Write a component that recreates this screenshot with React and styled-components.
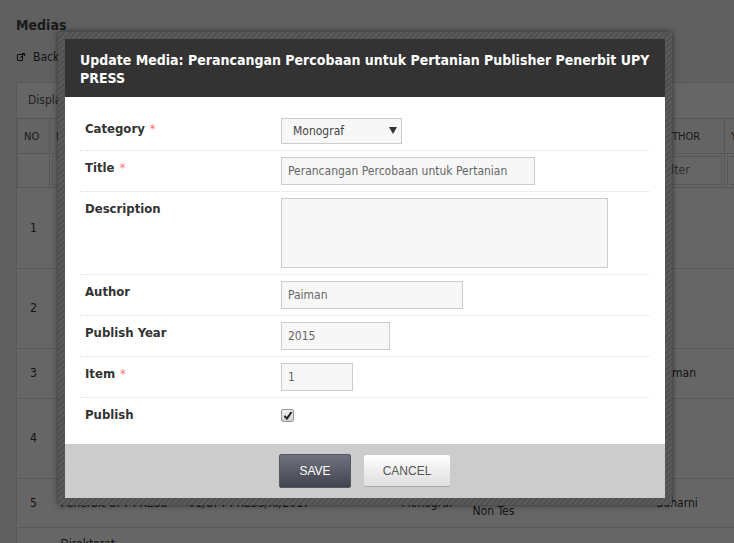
import React from 'react';
import styled, { createGlobalStyle } from 'styled-components';

const bodyFont = '"DejaVu Sans Condensed", "Open Sans", sans-serif';

const GlobalStyle = createGlobalStyle`
  html, body {
    margin: 0;
    padding: 0;
    height: 100%;
    overflow: hidden;
    background: #f0f0f0;
    font-family: ${bodyFont};
    font-size: 12px;
    color: #333;
  }
`;

const Page = styled.div`
  height: 543px;
  overflow: hidden;
  padding: 17px 0 0 16px;
  box-sizing: border-box;
`;

const PageTitle = styled.h1`
  margin: 0 0 15px;
  font-size: 14px;
  line-height: 17px;
  font-weight: 700;
  color: #444;
`;

const BackLink = styled.div`
  display: flex;
  align-items: center;
  gap: 7px;
  height: 16px;
  margin-bottom: 17px;
  font-size: 12px;
  color: #333;
`;

const Panel = styled.div`
  width: 800px;
  background: #fff;
  border: 1px solid #e2e2e2;
  border-right: 0;
`;

const PanelBar = styled.div`
  height: 35px;
  line-height: 35px;
  padding-left: 11px;
  color: #555;
`;

const Table = styled.table`
  width: 800px;
  table-layout: fixed;
  border-collapse: collapse;
`;

const HeadCell = styled.th`
  height: 34px;
  padding: 0 6px;
  font-size: 11px;
  font-weight: 400;
  text-align: left;
  color: #444;
  border: 1px solid #ddd;
  background: #f9f9f9;
`;

const FilterCell = styled.td`
  height: 29px;
  padding: 2px;
  border: 1px solid #ddd;
`;

const FilterBox = styled.div`
  height: 27px;
  line-height: 27px;
  padding-left: 8px;
  border: 1px dotted #bbb;
  color: #777;
  overflow: hidden;
`;

const Row = styled.tr`
  height: ${({ $h }) => $h}px;
`;

const Cell = styled.td`
  padding: 0 5px 0 ${({ $pad }) => $pad || 5}px;
  border-bottom: 1px solid #ddd;
  line-height: 16.5px;
  color: #333;
  vertical-align: middle;
  white-space: pre-line;
  text-align: ${({ $center }) => ($center ? 'center' : 'left')};
`;

const Overlay = styled.div`
  position: absolute;
  inset: 0;
  background: rgba(0, 0, 0, 0.6);
`;

const ModalFrame = styled.div`
  position: absolute;
  top: 32px;
  left: 58px;
  width: 600px;
  padding: 7px;
  background: repeating-linear-gradient(135deg, #505050 0 2px, #5a5a5a 2px 4px);
  box-shadow: 0 0 6px rgba(0, 0, 0, 0.55);
`;

const ModalHeader = styled.div`
  height: 58px;
  box-sizing: border-box;
  padding: 12px 15px 0;
  background: #333;
  color: #fff;
  font-size: 14px;
  font-weight: 700;
  line-height: 18px;
`;

const ModalBody = styled.div`
  height: 347px;
  box-sizing: border-box;
  padding: 15px 15px 0;
  background: #fff;
`;

const FormRow = styled.div`
  display: grid;
  grid-template-columns: 196px 1fr;
  padding: 6px 0 6px 5px;
  border-bottom: ${({ $last }) => ($last ? '0' : '1px dotted #ddd')};
`;

const Label = styled.div`
  padding-top: 2px;
  font-size: 13px;
  line-height: 18px;
  font-weight: 700;
  color: #333;
`;

const Required = styled.span`
  margin-left: 5px;
  color: #f77;
  font-weight: 400;
`;

const SelectWrap = styled.div`
  position: relative;
  width: 121px;
  height: 26px;
`;

const Select = styled.select`
  appearance: none;
  width: 100%;
  height: 100%;
  padding: 0 0 0 11px;
  border: 1px solid #ccc;
  border-radius: 0;
  background: #f7f7f7;
  font: 400 12px ${bodyFont};
  color: #444;
`;

const Caret = styled.span`
  position: absolute;
  top: 9px;
  right: 5px;
  width: 0;
  height: 0;
  border-left: 4px solid transparent;
  border-right: 4px solid transparent;
  border-top: 7px solid #333;
`;

const Field = styled.input`
  display: block;
  width: ${({ $w }) => $w}px;
  height: 28px;
  box-sizing: border-box;
  padding: 0 6px;
  border: 1px solid #ccc;
  background: #f7f7f7;
  font: 400 12px ${bodyFont};
  color: #666;
`;

const TextArea = styled.textarea`
  display: block;
  width: 327px;
  height: 70px;
  box-sizing: border-box;
  padding: 6px;
  border: 1px solid #ccc;
  background: #f7f7f7;
  resize: none;
`;

const CheckBox = styled.span`
  display: flex;
  align-items: center;
  justify-content: center;
  width: 13px;
  height: 13px;
  margin-top: 5px;
  box-sizing: border-box;
  border: 1px solid #999;
  border-radius: 2px;
  background: linear-gradient(#f0f0f0, #cfcfcf);
`;

const ModalFooter = styled.div`
  display: flex;
  align-items: center;
  justify-content: center;
  gap: 13px;
  height: 54px;
  padding-right: 1px;
  background: #ccc;
`;

const SaveButton = styled.button`
  width: 72px;
  height: 34px;
  padding: 0;
  border: 1px solid #555761;
  border-radius: 2px;
  background: linear-gradient(#70727f, #41434d);
  color: #fff;
  font: 400 12px "Liberation Sans", Arial, sans-serif;
`;

const CancelButton = styled.button`
  width: 86px;
  height: 32px;
  padding: 0;
  border: 0;
  border-bottom: 1px solid #aaa;
  border-radius: 2px;
  background: linear-gradient(#fff, #dedede);
  color: #555;
  font: 400 12px "Liberation Sans", Arial, sans-serif;
`;

const columns = [32, 134, 213, 71, 184, 73, 92];

const longPublisher = 'Direktorat\nPendidikan\nUniversitas\nIslam';

const rows = [
  { no: 1, h: 81, pub: longPublisher, num: '', cat: '', title: '', author: '' },
  { no: 2, h: 80, pub: longPublisher, num: '', cat: '', title: '', author: '' },
  { no: 3, h: 50, pub: 'Penerbit UPY PRESS', num: '', cat: '', title: '', author: 'Paiman' },
  { no: 4, h: 80, pub: longPublisher, num: '', cat: '', title: '', author: '' },
  { no: 5, h: 49, pub: 'Penerbit UPY PRESS', num: '01/UPY PRESS/XI/2017', cat: 'Monograf', title: 'Pemahaman Individu Teknik\nNon Tes', author: 'Suharni' },
  { no: '', h: 82, pub: 'Direktorat\nPendidikan\nTinggi\nIslam', num: '', cat: '', title: 'Mencintakan Masyarakat Desa', author: '' },
];

function Background() {
  return (
    <Page>
      <PageTitle>Medias</PageTitle>
      <BackLink>
        <svg width="10" height="10" viewBox="0 0 10 10" fill="none" stroke="#222" strokeWidth="1">
          <path d="M1.5 2.5h5v6h-5zM4 6l4.5-4.5M6 1.5h2.5V4" />
        </svg>
        Back to list
      </BackLink>
      <Panel>
        <PanelBar>Display</PanelBar>
        <Table>
          <colgroup>
            {columns.map((w, i) => <col key={i} width={w} />)}
          </colgroup>
          <thead>
            <tr>
              {['NO', 'PUBLISHER', 'NUMBER', 'CATEGORY', 'TITLE', 'AUTHOR', 'YEAR'].map((h) => (
                <HeadCell key={h}>{h}</HeadCell>
              ))}
            </tr>
            <tr>
              <FilterCell />
              {['Filter', 'Filter', 'Filter', 'Filter', 'Filter', 'Filter'].map((f, i) => (
                <FilterCell key={i}><FilterBox>{f}</FilterBox></FilterCell>
              ))}
            </tr>
          </thead>
          <tbody>
            {rows.map((r, i) => (
              <Row key={i} $h={r.h}>
                <Cell $center>{r.no}</Cell>
                <Cell $pad={11}>{r.pub}</Cell>
                <Cell>{r.num}</Cell>
                <Cell>{r.cat}</Cell>
                <Cell>{r.title}</Cell>
                <Cell>{r.author}</Cell>
                <Cell />
              </Row>
            ))}
          </tbody>
        </Table>
      </Panel>
    </Page>
  );
}

export default function App() {
  return (
    <>
      <GlobalStyle />
      <Background />
      <Overlay />
      <ModalFrame>
        <ModalHeader>Update Media: Perancangan Percobaan untuk Pertanian Publisher Penerbit UPY PRESS</ModalHeader>
        <ModalBody>
          <FormRow>
            <Label>Category<Required>*</Required></Label>
            <SelectWrap>
              <Select defaultValue="Monograf">
                <option>Monograf</option>
              </Select>
              <Caret />
            </SelectWrap>
          </FormRow>
          <FormRow>
            <Label>Title<Required>*</Required></Label>
            <Field $w={254} defaultValue="Perancangan Percobaan untuk Pertanian" />
          </FormRow>
          <FormRow>
            <Label>Description</Label>
            <TextArea />
          </FormRow>
          <FormRow>
            <Label>Author</Label>
            <Field $w={182} defaultValue="Paiman" />
          </FormRow>
          <FormRow>
            <Label>Publish Year</Label>
            <Field $w={109} defaultValue="2015" />
          </FormRow>
          <FormRow>
            <Label>Item<Required>*</Required></Label>
            <Field $w={72} defaultValue="1" />
          </FormRow>
          <FormRow $last>
            <Label>Publish</Label>
            <CheckBox>
              <svg width="10" height="9" viewBox="0 0 10 9" fill="none" stroke="#222" strokeWidth="2">
                <path d="M1.5 5l2.5 2.5L8.5 1" />
              </svg>
            </CheckBox>
          </FormRow>
        </ModalBody>
        <ModalFooter>
          <SaveButton>SAVE</SaveButton>
          <CancelButton>CANCEL</CancelButton>
        </ModalFooter>
      </ModalFrame>
    </>
  );
}
